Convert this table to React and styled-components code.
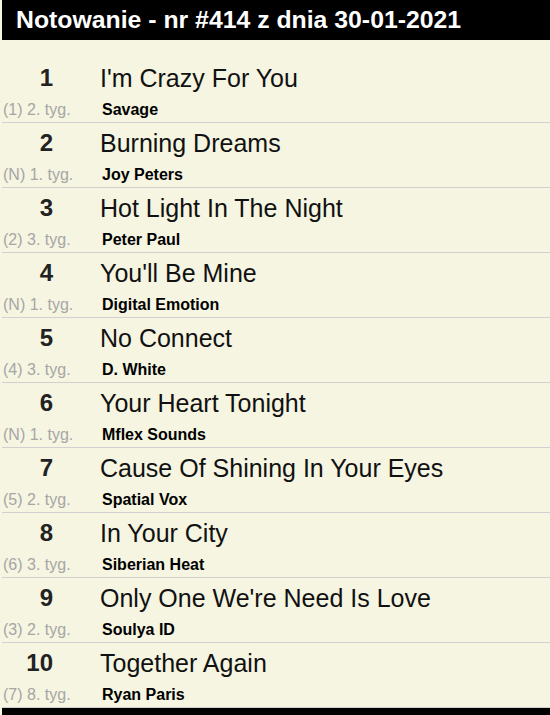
import React from "react";
import styled, { createGlobalStyle } from "styled-components";

const Global = createGlobalStyle`
  html, body { margin: 0; padding: 0; background: #f5f5e1; }
  body { padding-left: 2px; font-family: "Liberation Sans", Arial, sans-serif; }
`;

const Page = styled.div`
  background: #f5f5e1;
  min-height: 715px;
`;

const Header = styled.h1`
  margin: 0;
  height: 40px;
  line-height: 40px;
  background: #000;
  color: #fff;
  font-family: "Liberation Sans", Arial, sans-serif;
  font-size: 24.8px;
  font-weight: bold;
  padding-left: 14px;
  white-space: nowrap;
`;

const List = styled.ol`
  list-style: none;
  margin: 0;
  padding: 18px 0 0 0;
`;

const Row = styled.li`
  display: grid;
  grid-template-columns: 98px 1fr;
  grid-template-rows: 32px 20px;
  row-gap: 6px;
  padding: 4px 0 2px 0;
  border-bottom: 1px solid #d0d0d0;
`;

const Num = styled.div`
  width: 51px;
  text-align: right;
  font-family: "Liberation Sans", Arial, sans-serif;
  font-size: 24px;
  font-weight: bold;
  line-height: 32px;
  color: #222;
`;

const Title = styled.div`
  font-family: "Liberation Sans", Arial, sans-serif;
  font-size: 25px;
  line-height: 32px;
  color: #111;
  white-space: nowrap;
`;

const Weeks = styled.div`
  padding-left: 1px;
  font-family: "Liberation Sans", Arial, sans-serif;
  font-size: 16px;
  line-height: 20px;
  color: #a6a6a6;
  white-space: nowrap;
`;

const Artist = styled.div`
  padding-left: 2px;
  font-family: "Liberation Sans", Arial, sans-serif;
  font-size: 16px;
  font-weight: bold;
  line-height: 20px;
  color: #000;
  white-space: nowrap;
`;

const Footer = styled.div`
  height: 8px;
  background: #000;
`;

const data = [
  ["1", "I'm Crazy For You", "(1) 2. tyg.", "Savage"],
  ["2", "Burning Dreams", "(N) 1. tyg.", "Joy Peters"],
  ["3", "Hot Light In The Night", "(2) 3. tyg.", "Peter Paul"],
  ["4", "You'll Be Mine", "(N) 1. tyg.", "Digital Emotion"],
  ["5", "No Connect", "(4) 3. tyg.", "D. White"],
  ["6", "Your Heart Tonight", "(N) 1. tyg.", "Mflex Sounds"],
  ["7", "Cause Of Shining In Your Eyes", "(5) 2. tyg.", "Spatial Vox"],
  ["8", "In Your City", "(6) 3. tyg.", "Siberian Heat"],
  ["9", "Only One We're Need Is Love", "(3) 2. tyg.", "Soulya ID"],
  ["10", "Together Again", "(7) 8. tyg.", "Ryan Paris"],
];

export default function App() {
  return (
    <Page>
      <Global />
      <Header>Notowanie - nr #414 z dnia 30-01-2021</Header>
      <List>
        {data.map(([n, t, w, a]) => (
          <Row key={n}>
            <Num>{n}</Num>
            <Title>{t}</Title>
            <Weeks>{w}</Weeks>
            <Artist>{a}</Artist>
          </Row>
        ))}
      </List>
      <Footer />
    </Page>
  );
}
